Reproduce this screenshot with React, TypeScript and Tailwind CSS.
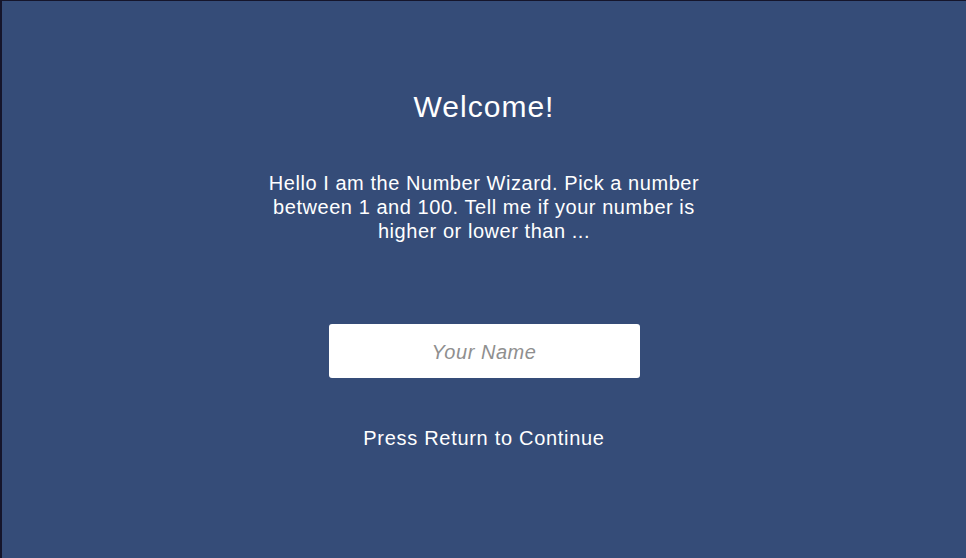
import React from "react";

const App = () => {
  return (
    <div className="h-[558px] w-[966px] overflow-hidden border-l-[2px] border-t border-[#15152b] bg-[#354c78] font-['Liberation_Sans',Arial,sans-serif] text-white">
      <div className="flex flex-col items-center pt-[90px]">
        <h1 className="text-[30px] leading-[32px] tracking-[1px]">Welcome!</h1>
        <p className="mt-[48px] w-[470px] text-center text-[20px] leading-[24px] tracking-[0.55px]">
          Hello I am the Number Wizard. Pick a number between 1 and 100. Tell me if your number is
          higher or lower than ...
        </p>
        <input
          type="text"
          placeholder="Your Name"
          className="mt-[81px] h-[54px] w-[311px] rounded-[3px] bg-white pt-[3px] text-center text-[20px] italic tracking-[0.55px] text-gray-800 outline-none placeholder:text-[#8f8f8f]"
        />
        <p className="mt-[48px] text-[20px] leading-[24px] tracking-[0.7px]">Press Return to Continue</p>
      </div>
    </div>
  );
};

export default App;
